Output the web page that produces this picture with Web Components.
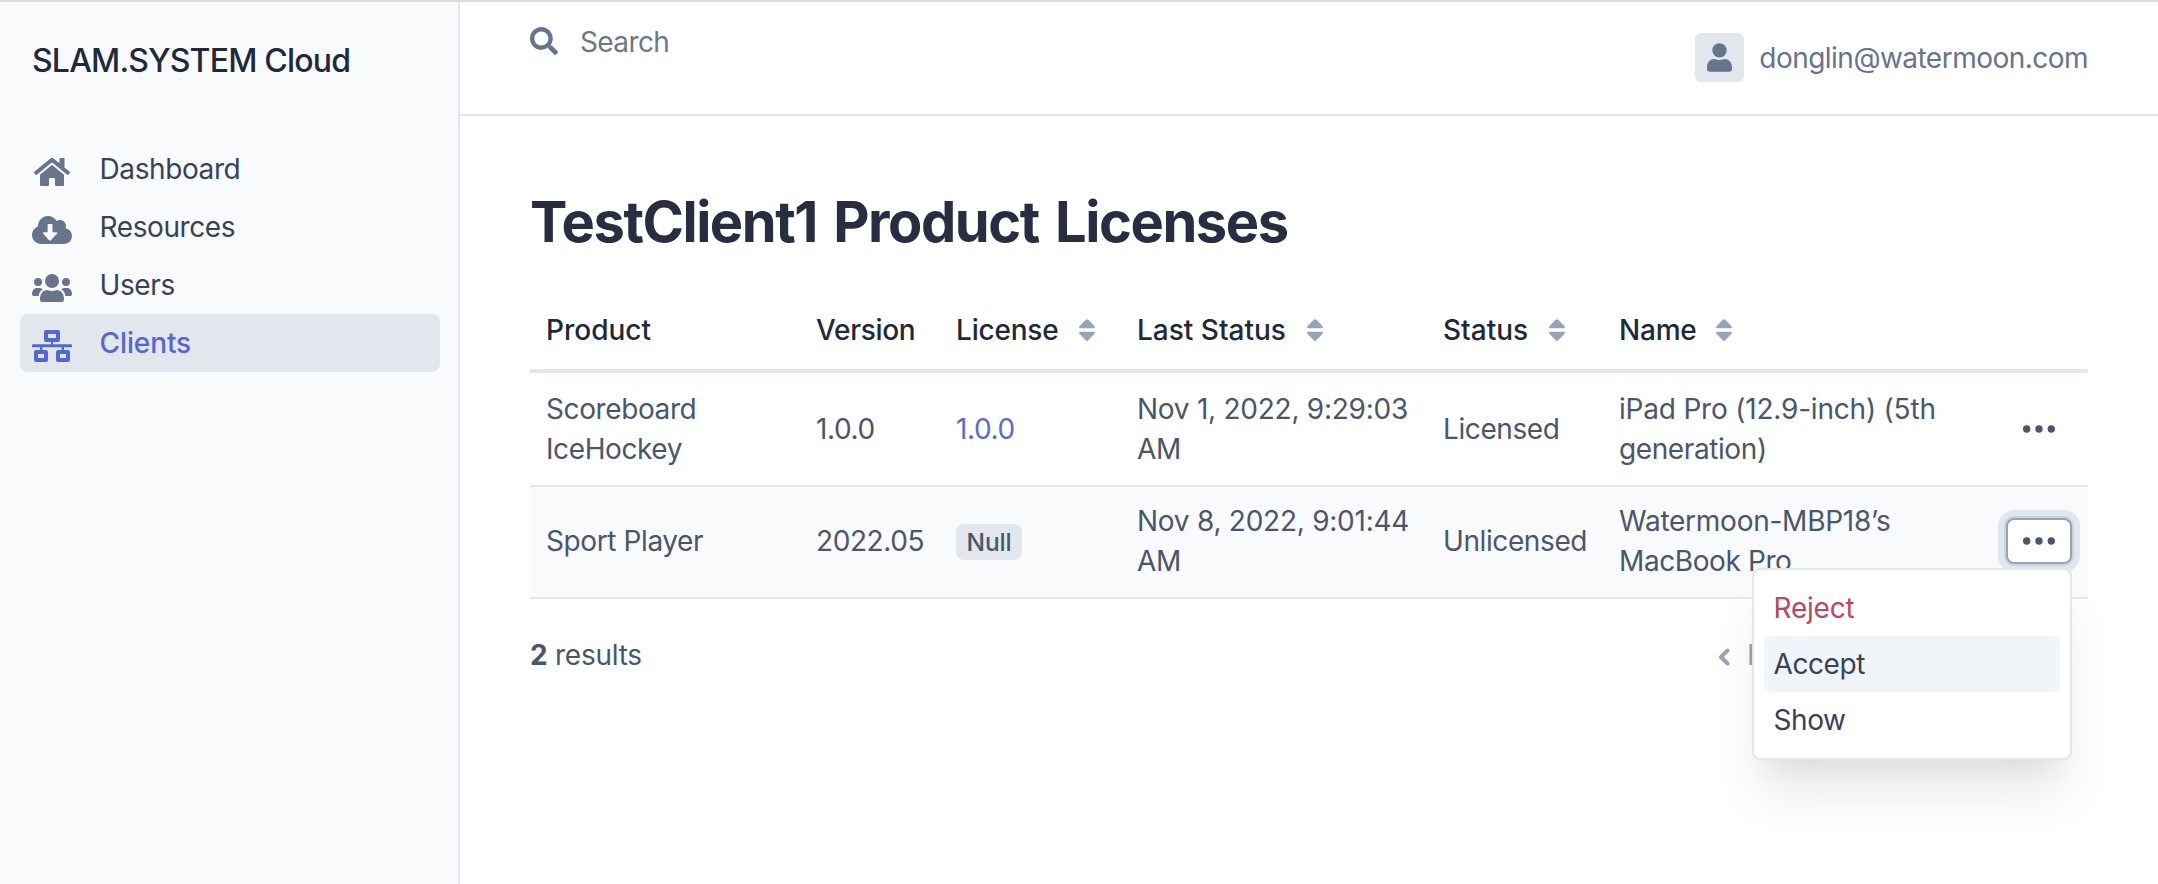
<!DOCTYPE html>
<html lang="en">
<head>
<meta charset="utf-8">
<title>SLAM.SYSTEM Cloud</title>
<style>
html,body{margin:0;height:100%}
body{font:430 28px/40px Inter,"Liberation Sans",sans-serif;letter-spacing:-.4px;color:#4a566a;background:#fff;overflow:hidden;-webkit-font-smoothing:antialiased}
.wide{letter-spacing:-.25px}
</style>
</head>
<body>
<admin-app>
  <admin-sidebar slot="side" brand="SLAM.SYSTEM Cloud">
    <nav-item icon="home">Dashboard</nav-item>
    <nav-item icon="cloud">Resources</nav-item>
    <nav-item icon="users">Users</nav-item>
    <nav-item icon="network" active>Clients</nav-item>
  </admin-sidebar>
  <top-bar slot="top" user="donglin@watermoon.com"></top-bar>
  <page-title>TestClient1 Product Licenses</page-title>
  <data-row head>
    <span style="letter-spacing:0">Product</span><span style="letter-spacing:-.3px">Version</span>
    <sort-label style="--w:123px">License</sort-label>
    <sort-label style="--w:170px;letter-spacing:0">Last Status</sort-label>
    <sort-label style="--w:106px;letter-spacing:0">Status</sort-label>
    <sort-label style="--w:97px">Name</sort-label><span></span>
  </data-row>
  <data-row>
    <span>Scoreboard<br>IceHockey</span><span>1.0.0</span><span style="color:#5a6bd0">1.0.0</span>
    <span class="wide">Nov 1, 2022, 9:29:03<br>AM</span><span>Licensed</span>
    <span><span style="letter-spacing:-.2px">iPad Pro (12.9-inch) (5th</span><br>generation)</span><action-menu></action-menu>
  </data-row>
  <data-row striped>
    <span>Sport Player</span><span>2022.05</span><null-badge>Null</null-badge>
    <span class="wide">Nov 8, 2022, 9:01:44<br>AM</span><span>Unlicensed</span>
    <span><span class="wide">Watermoon-MBP18’s</span><br>MacBook Pro</span>
    <action-menu open>
      <menu-entry danger>Reject</menu-entry>
      <menu-entry hover>Accept</menu-entry>
      <menu-entry>Show</menu-entry>
    </action-menu>
  </data-row>
  <page-footer count="2"></page-footer>
</admin-app>
<script>
const ICONS = {
  home: ['0 32 576 448', 36, 28, '<path d="M280.37 148.26L96 300.11V464a16 16 0 0 0 16 16l112.06-.29a16 16 0 0 0 15.92-16V368a16 16 0 0 1 16-16h64a16 16 0 0 1 16 16v95.64a16 16 0 0 0 16 16.05L464 480a16 16 0 0 0 16-16V300L295.67 148.26a12.19 12.19 0 0 0-15.3 0zM571.6 251.47L488 182.56V44.05a12 12 0 0 0-12-12h-56a12 12 0 0 0-12 12v72.61L318.47 43a48 48 0 0 0-61 0L4.34 251.47a12 12 0 0 0-1.6 16.9l25.5 31A12 12 0 0 0 45.15 301l235.22-193.74a12.19 12.19 0 0 1 15.3 0L530.9 301a12 12 0 0 0 16.9-1.6l25.5-31a12 12 0 0 0-1.7-16.93z"/>'],
  cloud: ['0 32 640 448', 40, 28, '<path fill-rule="evenodd" d="M144 480C64.5 480 0 415.5 0 336c0-62.8 40.2-116.2 96.2-135.9c-.1-2.7-.2-5.4-.2-8.1c0-88.4 71.6-160 160-160c59.3 0 111 32.2 138.7 80.2C409.9 102 428.3 96 448 96c53 0 96 43 96 96c0 12.2-2.3 23.8-6.4 34.6C596 238.4 640 290.1 640 352c0 70.7-57.3 128-128 128H144zM264 160q-14 0-14 14V290H186q-22 3-10 20L274 420q14 12 28 0L402 310q12-17-10-20H328V174q0-14-14-14z"/>'],
  users: ['0 0 120 84', 40, 28, '<circle cx="60" cy="21" r="21"/><circle cx="18" cy="24" r="12"/><circle cx="102" cy="24" r="12"/><path d="M24 77c0-18 9-29 22-29q7 3.500 14 3.500t14-3.500c13 0 22 11 22 29a7 7 0 0 1-7 7h-58a7 7 0 0 1-7-7zM0 61C0 50 6 42 15 42h7q6 0 10 4c-7 4-11 11-12 20H5a5 5 0 0 1-5-5zM120 61C120 50 114 42 105 42h-7q-6 0-10 4c7 4 11 11 12 20h15a5 5 0 0 0 5-5z"/>'],
  network: ['0 0 120 96', 40, 32, '<path fill-rule="evenodd" d="M42 0h36a6 6 0 0 1 6 6v24a6 6 0 0 1-6 6H63v7h54a3 4 0 0 1 0 9H96v8h12a6 6 0 0 1 6 6v24a6 6 0 0 1-6 6H78a6 6 0 0 1-6-6V66a6 6 0 0 1 6-6h11v-8H31v8h11a6 6 0 0 1 6 6v24a6 6 0 0 1-6 6H12a6 6 0 0 1-6-6V66a6 6 0 0 1 6-6h12v-8H3a3 4 0 0 1 0-9h54v-7H42a6 6 0 0 1-6-6V6a6 6 0 0 1 6-6zM48 12v12h24V12zM18 72v12h18V72zM84 72v12h18V72z"/>'],
  search: ['0 0 512 512', 28, 28, '<path d="M505 442.7L405.3 343c-4.500-4.500-10.600-7-17-7H372c27.600-35.300 44-79.700 44-128C416 93.100 322.900 0 208 0S0 93.100 0 208s93.100 208 208 208c48.300 0 92.700-16.400 128-44v16.300c0 6.400 2.500 12.500 7 17l99.700 99.700c9.400 9.400 24.600 9.400 33.900 0l28.300-28.300c9.400-9.400 9.400-24.600.1-34zM208 336c-70.700 0-128-57.200-128-128 0-70.700 57.200-128 128-128 70.700 0 128 57.200 128 128 0 70.700-57.200 128-128 128z"/>'],
  user: ['0 0 75 86', 25, 28.7, '<circle cx="37.500" cy="22" r="21.500"/><path d="M0 74C0 58 10 48 23 48q7 3 14.500 3T52 48c13 0 23 10 23 26v5a7 7 0 0 1-7 7H7a7 7 0 0 1-7-7z"/>'],
  sort: ['0 0 16 22', 16, 22, '<path d="M8 0.200q.7 0 1.300.6l6.300 6.500q.8 1.700-.8 2H1.200q-1.600-.3-.8-2L6.700.8Q7.300.2 8 .2zM8 21.800q.7 0 1.300-.6l6.300-6.500q.8-1.700-.8-2H1.200q-1.600.3-.8 2l6.300 6.500q.6.6 1.300.6z"/>'],
  dots: ['0 0 32 8', 32, 8, '<circle cx="3.700" cy="4" r="3.700"/><circle cx="16" cy="4" r="3.700"/><circle cx="28.300" cy="4" r="3.700"/>'],
  left: ['0 0 12 18', 12, 18, '<path d="M9.500 2.500L3 9l6.500 6.500" fill="none" stroke="currentColor" stroke-width="4" stroke-linecap="round" stroke-linejoin="round"/>']
};
const icon = n => { const [v, w, h, b] = ICONS[n]; return `<svg viewBox="${v}" width="${w}" height="${h}" fill="currentColor" aria-hidden="true">${b}</svg>`; };
const define = (name, css, html) => customElements.define(name, class extends HTMLElement {
  constructor() {
    super();
    this.attachShadow({ mode: 'open' }).innerHTML =
      `<style>*{box-sizing:border-box}svg{display:block;flex:none}${css}</style>` + html(this);
  }
});

define('admin-app', `
  :host{display:grid;box-sizing:border-box;grid-template-columns:460px 1fr;height:100vh;border-top:2px solid #dcdcdd}
  .main{display:flex;flex-direction:column;min-width:0}
  .content{padding:72px 70px 0}`,
  () => `<slot name="side"></slot><div class="main"><slot name="top"></slot><div class="content"><slot></slot></div></div>`);

define('admin-sidebar', `
  :host{display:block;box-sizing:border-box;background:#f9fafc;border-right:2px solid #e2e7ee;padding:39px 18px 0 20px}
  .brand{font-size:32px;font-weight:520;color:#1e293b;padding-left:12px;margin-bottom:59px;letter-spacing:-.8px;white-space:nowrap}`,
  el => `<div class="brand">${el.getAttribute('brand')}</div><nav><slot></slot></nav>`);

define('nav-item', `
  :host{display:flex;align-items:center;height:58px;padding-left:12px;border-radius:8px;color:#364356}
  :host([active]){background:#e2e7ee;color:#5468d4;font-weight:520;letter-spacing:-.1px}
  i{display:flex;width:40px;justify-content:center;margin:6px 27.5px 0 0;color:#67748b}
  :host([active]) i{color:inherit}`,
  el => `<i>${icon(el.getAttribute('icon'))}</i><slot></slot>`);

define('top-bar', `
  :host{display:flex;box-sizing:border-box;height:114px;border-bottom:2px solid #e2e7ee;padding:0 70px;justify-content:space-between;color:#67748b}
  .search{display:flex;align-items:center;height:40px;margin-top:20px;gap:22px;color:#6f7880;letter-spacing:-.6px}
  .search svg{color:#67748b;margin-top:-2px}
  .user{display:flex;align-items:center;height:49px;margin-top:31px;gap:15.5px;letter-spacing:-.52px}
  .avatar{display:flex;align-items:center;justify-content:center;width:49px;height:49px;border-radius:6px;background:#e2e7ee}`,
  el => `<div class="search">${icon('search')}<span>Search</span></div>
    <div class="user"><div class="avatar">${icon('user')}</div><span>${el.getAttribute('user')}</span></div>`);

define('page-title', `
  :host{display:block;font-size:56px;line-height:68px;font-weight:700;color:#292d42;letter-spacing:-1.45px;word-spacing:4.5px;margin-bottom:35px;white-space:nowrap}`,
  () => `<slot></slot>`);

define('data-row', `
  :host{display:grid;box-sizing:border-box;width:1558px;grid-template-columns:270px 140px 181px 306px 176px 387px 82px;align-items:center;height:114px;padding-left:16px;border-bottom:2px solid #e2e7ee;white-space:nowrap}
  :host([head]){height:82px;border-bottom-width:4px;font-weight:520;color:#1e293b;letter-spacing:-.2px}
  :host([striped]){height:112px;padding-bottom:2px;background:#f9fafc}`,
  () => `<slot></slot>`);

define('sort-label', `
  :host{display:flex;align-items:center}
  span{width:var(--w)}
  svg{color:#97a3b7}`,
  () => `<span><slot></slot></span>${icon('sort')}`);

define('null-badge', `
  :host{display:block;box-sizing:border-box;width:66px;height:36px;border-radius:8px;background:#e2e7ee;font-size:24.5px;line-height:37px;font-weight:520;text-align:center;letter-spacing:-.2px;margin-top:2px}`,
  () => `<slot></slot>`);

define('action-menu', `
  :host{display:block;position:relative;width:66px;height:46px}
  .btn{display:flex;align-items:center;justify-content:center;height:46px;border-radius:8px}
  .menu{display:none}
  :host([open]) .btn{background:#fff;border:2px solid #97a3b7;box-shadow:0 0 0 2px #cbd5e1,0 0 0 8px #e2e7ee}
  :host([open]) .menu{display:block;position:absolute;z-index:2;right:0;top:50px;width:320px;height:192px;padding:10px;background:#fff;border:2px solid #e2e7ee;border-radius:8px;box-shadow:0 40px 50px -10px rgba(0,0,0,.1),0 20px 20px -10px rgba(0,0,0,.04)}`,
  () => `<div class="btn">${icon('dots')}</div><div class="menu"><slot></slot></div>`);

define('menu-entry', `
  :host{display:flex;align-items:center;height:56px;padding-left:9.5px;border-radius:8px;color:#364356}
  :host([hover]){background:#f1f4f9}
  :host([danger]){color:#be4561;letter-spacing:-.2px}`,
  () => `<slot></slot>`);

define('page-footer', `
  :host{display:flex;justify-content:space-between;align-items:center;width:1558px;height:40px;margin-top:36px}
  .count{letter-spacing:-.25px}
  .prev{display:flex;align-items:center;gap:17px;width:370px;color:#97a3b7}
  .prev svg{margin-top:4px}
  b{font-weight:700}`,
  el => `<span class="count"><b>${el.getAttribute('count')}</b> results</span><span class="prev">${icon('left')}<span>Previous</span></span>`);
</script>
</body>
</html>
